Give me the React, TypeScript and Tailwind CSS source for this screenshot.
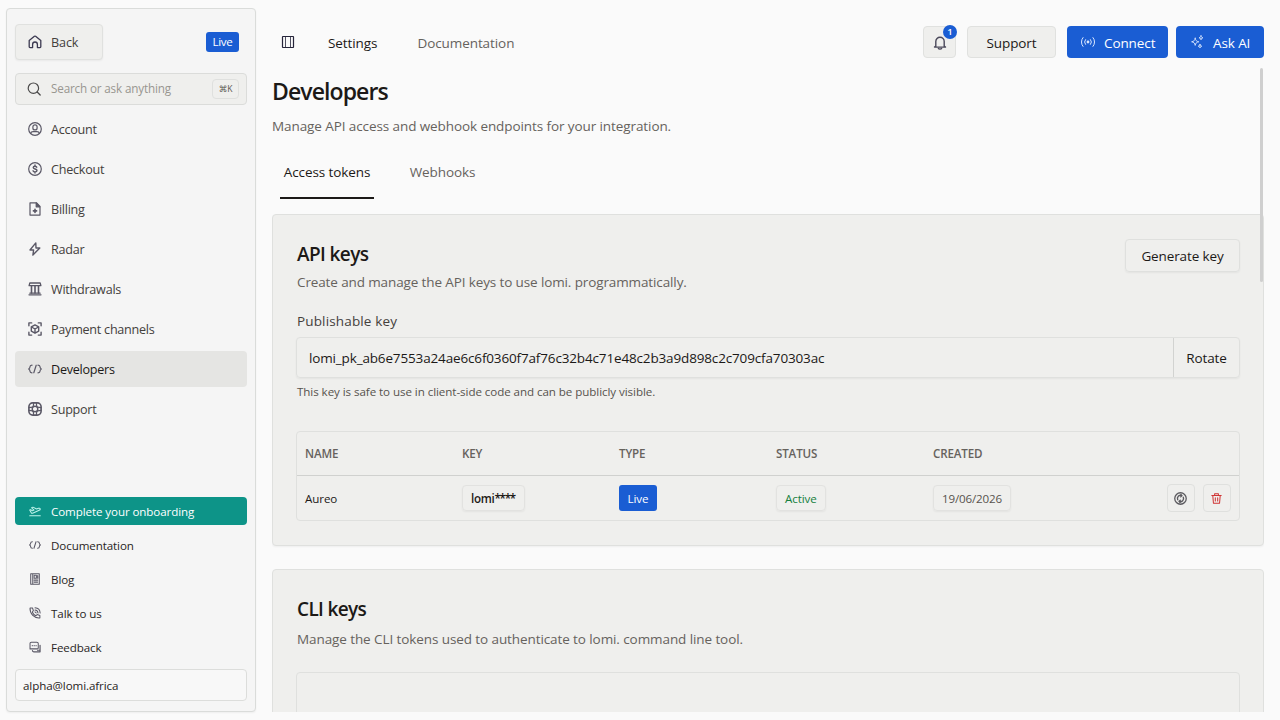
import type { ReactNode } from "react";
import clsx from "clsx";

interface IconProps {
  size?: number;
  className?: string;
  children?: ReactNode;
}

// All icons share a 14 unit grid with round strokes
function Icon({ size = 14, className, children }: IconProps) {
  return (
    <svg
      width={size}
      height={size}
      viewBox="0 0 14 14"
      fill="none"
      stroke="currentColor"
      strokeWidth="1.2"
      strokeLinecap="round"
      strokeLinejoin="round"
      className={clsx("shrink-0", className)}
      aria-hidden="true"
    >
      {children}
    </svg>
  );
}

const icons = {
  home: (
    <path d="M1.2 5.6v6.2a.8.8 0 0 0 .8.8h2.6V9.4a2.4 2.4 0 0 1 4.8 0v3.2H12a.8.8 0 0 0 .8-.8V5.6L7.6 1.3a1 1 0 0 0-1.2 0z" strokeWidth="1.3" />
  ),
  search: (
    <>
      <circle cx="6.4" cy="6.2" r="5.2" />
      <path d="m10.2 10 3 3" />
    </>
  ),
  account: (
    <>
      <circle cx="7" cy="7" r="6.3" />
      <rect x="4.9" y="2.9" width="4.2" height="5" rx="2" />
      <path d="M2.7 11.3c.3-1.3 1.3-1.7 2.3-1.7h4c1 0 2 .4 2.3 1.7" />
    </>
  ),
  checkout: (
    <>
      <circle cx="7" cy="7" r="6.3" />
      <path d="M8.8 5.2c-.2-.7-.9-1-1.8-1-1.1 0-1.8.5-1.8 1.3 0 2 3.8 1 3.8 3 0 .8-.8 1.4-2 1.4-1 0-1.7-.4-2-1.1M7 3v1.2M7 9.9V11" strokeWidth="1.4" />
    </>
  ),
  billing: (
    <>
      <path d="M2 .9v12.2h10V4.5L8.6.9H2z" />
      <path d="M8.2 1v3.8h3.6z" fill="currentColor" />
      <path d="M7 7.3v3.2M5.4 8.9h3.2" strokeWidth="1.6" />
    </>
  ),
  radar: <path d="M7.8.9 2 8h3.6l-.7 5.1L11.800 6H8z" strokeWidth="1.4" />,
  withdrawals: (
    <>
      <path d="M1.1 3.7 1.8 1h10.4l.7 2.7zM1 12.8h12M1.9 11.2h10.2" strokeWidth="1.3" />
      <path d="M3.5 4v7M7 4v7M10.5 4v7" strokeWidth="1.6" />
    </>
  ),
  channels: (
    <>
      <path d="M.9 3.7V.9h2.8M10.3.9h2.8v2.8M13.1 10.3v2.8h-2.8M3.7 13.1H.9v-2.8" strokeWidth="1.4" />
      <path d="m7 2.9 3.7 2v4.2L7 11.2 3.3 9.1V4.900zM3.5 5 7 7l3.5-2M7 7v4" strokeWidth="1.4" />
    </>
  ),
  code: (
    <path d="M4 3.2c-1.3.1-2 .6-2 1.6 0 1-.4 1.7-1.3 2.2.9.5 1.3 1.2 1.3 2.2s.7 1.5 2 1.6M10 3.2c1.3.1 2 .6 2 1.6 0 1 .4 1.7 1.3 2.2-.9.5-1.3 1.2-1.3 2.2s-.7 1.5-2 1.6M8.2 3.2l-2.4 7.6" />
  ),
  support: (
    <>
      <rect x=".9" y=".9" width="12.2" height="12.2" rx="3.8" strokeWidth="1.6" />
      <circle cx="7" cy="7" r="2.8" strokeWidth="1.4" />
      <path d="m5.7 1-.5 3.6M8.3 1l.5 3.6M5.7 13l-.5-3.6M8.3 13l.5-3.6M1 5.7l3.6-.5M1 8.3l3.6.5M13 5.7l-3.6-.5M13 8.3l-3.6.5" />
    </>
  ),
  onboarding: (
    <>
      <path d="M.8 12.6h12.4" />
      <path d="m.8 5.8 1.2-.4 1.8 1.4 2-.8L3 3.2l1.600-.7 4.3 2.2 2.1-.8c1-.3 2 .1 2.1.7.1.6-.3 1.2-1.2 1.5L4.2 9.600H3z" />
    </>
  ),
  blog: (
    <>
      <path d="M2 .9h10v12.2H2zM4.4 1v12" />
      <rect x="6" y="2.6" width="2.6" height="3.6" />
      <path d="M6 8.4h4M6 10.6h4M10.2 3v3" strokeWidth="1.4" />
    </>
  ),
  call: (
    <>
      <path d="M1.2 1.2h2.9l1 3.1-1.3 1.5a8 8 0 0 0 4.3 4.4l1.5-1.4 3.1 1v2.9C6.3 13.4.8 8 1.2 1.2z" />
      <path d="M7 3.5c2 .2 3.3 1.5 3.5 3.5M7 1c3.3.2 5.8 2.7 6 6M7 5.7c.8.1 1.2.5 1.3 1.3" />
    </>
  ),
  feedback: (
    <>
      <path d="M1.2 9.2h8.6a1 1 0 0 0 1-1V3a1.6 1.6 0 0 0-1.6-1.6H2.8A1.6 1.6 0 0 0 1.2 3z" />
      <path d="M12.9 5v7.6H5.5c-1 0-1.5-.6-1.5-1.4M3.8 5.4h.1M6 5.4h.1M8.2 5.4h.1M10 10.8h3" strokeWidth="1.4" />
    </>
  ),
  panel: (
    <>
      <rect x="1.5" y="1.5" width="11" height="11" rx=".4" />
      <path d="M4.5 1.5v11M9.5 1.5v11" strokeWidth=".8" />
    </>
  ),
  bell: (
    <>
      <path d="M2.8 10.2V5.4a4.2 4.2 0 0 1 8.4 0v4.8l1.3.9h-11z" strokeWidth="1.4" />
      <path d="M5.4 12.4c.4.9 2.8.9 3.2 0" strokeWidth="1.4" />
    </>
  ),
  connect: (
    <>
      <circle cx="7" cy="7" r=".8" fill="currentColor" />
      <path d="M4.5 4.6a3.7 3.7 0 0 0 0 4.8M9.5 4.6a3.7 3.7 0 0 1 0 4.8M2 2.6a6.7 6.7 0 0 0 0 8.8M12 2.6a6.7 6.7 0 0 1 0 8.8" strokeWidth="1" />
    </>
  ),
  sparkles: (
    <path
      d="M5.2 3.2c.4 2.3 1.2 3.2 3.6 3.6-2.4.4-3.2 1.3-3.6 3.6-.4-2.3-1.2-3.2-3.6-3.6 2.4-.4 3.2-1.3 3.6-3.6zM11 .8c.2 1.3.7 1.8 2 2-1.3.2-1.8.7-2 2-.2-1.3-.7-1.8-2-2 1.3-.2 1.8-.7 2-2zM10 9.4c.2 1.2.6 1.6 1.8 1.8-1.2.2-1.6.6-1.8 1.8-.2-1.2-.6-1.6-1.8-1.8 1.2-.2 1.6-.6 1.8-1.8z"
      strokeWidth=".9"
    />
  ),
  rotate: (
    <>
      <circle cx="7" cy="7" r="6.2" strokeWidth="1.4" />
      <path d="M4 8.3a3.3 3.3 0 0 1 4.3-4.4M10 5.7a3.3 3.3 0 0 1-4.3 4.4M7.4 2.7l1.2 1.3-1.4 1.1M6.6 11.3 5.4 10l1.4-1.1" strokeWidth="1.5" />
    </>
  ),
  trash: (
    <path d="M1 3.2h12M4.6 3V1h4.8v2M2.3 3.4l.8 9.6h7.8l.8-9.6M5.5 6.2v4M8.5 6.2v4" strokeWidth="1.3" />
  ),
};

const navItems = [
  { label: "Account", icon: icons.account },
  { label: "Checkout", icon: icons.checkout },
  { label: "Billing", icon: icons.billing },
  { label: "Radar", icon: icons.radar },
  { label: "Withdrawals", icon: icons.withdrawals },
  { label: "Payment channels", icon: icons.channels },
  { label: "Developers", icon: icons.code, active: true },
  { label: "Support", icon: icons.support },
];

const helpItems = [
  { label: "Complete your onboarding", icon: icons.onboarding, highlight: true },
  { label: "Documentation", icon: icons.code },
  { label: "Blog", icon: icons.blog },
  { label: "Talk to us", icon: icons.call },
  { label: "Feedback", icon: icons.feedback },
];

function Sidebar() {
  return (
    <aside className="flex w-[250px] shrink-0 flex-col rounded border border-[#dadcda] bg-[#f5f5f5] px-2 pt-[15px] pb-[10px] shadow-xs">
      <div className="flex items-center justify-between pr-2">
        <button className="flex h-9 w-[88px] items-center gap-[9px] rounded border border-[#e0e1df] bg-[#efefed] pl-[12px] text-[12.6px] tracking-[-0.1px] text-[#44403c] shadow-xs">
          <Icon className="text-[#3b3950]">{icons.home}</Icon>
          <span className="pt-0.5">Back</span>
        </button>
        <span className="flex h-5 w-[33px] items-center justify-center rounded-[3px] bg-[#1a5dd3] text-[11.6px] tracking-[-0.3px] text-white">
          Live
        </span>
      </div>

      <div className="mt-[13px] flex h-8 items-center rounded border border-[#dbdcda] bg-[#efefed] pr-[7px] pl-[11px]">
        <Icon className="text-[#4b4a4a]">{icons.search}</Icon>
        <span className="ml-2.5 flex-1 text-[11.7px] tracking-[-0.16px] text-[#989690]">Search or ask anything</span>
        <kbd className="flex h-5 w-[27px] items-center justify-center rounded border border-[#dfe0de] pt-px font-['Open_Sans','DejaVu_Sans',sans-serif] text-[8.5px] tracking-[-0.2px] text-[#57534e]">
          ⌘K
        </kbd>
      </div>

      <nav className="mt-1.5 flex flex-col gap-1">
        {navItems.map((item) => (
          <a
            key={item.label}
            className={clsx(
              "flex h-9 items-center gap-[9px] rounded pl-[13px] text-[12.6px] tracking-[-0.25px]",
              item.active ? "bg-[#e5e5e3] text-[#1c1917]" : "text-[#44403c]",
            )}
          >
            <Icon className="text-[#5a5866]">{item.icon}</Icon>
            <span className="pt-0.5">{item.label}</span>
          </a>
        ))}
      </nav>

      <div className="mt-auto flex flex-col gap-1.5">
        {helpItems.map((item) => (
          <a
            key={item.label}
            className={clsx(
              "flex h-7 items-center gap-[10px] rounded pl-[14px] text-[11.6px] tracking-[-0.1px]",
              item.highlight ? "bg-[#0d9488] text-white" : "text-[#292524]",
            )}
          >
            <Icon size={12} className={item.highlight ? "text-[#bdf3ea]" : "text-[#5a5866]"}>
              {item.icon}
            </Icon>
            <span className="pt-0.5">{item.label}</span>
          </a>
        ))}
      </div>

      <div className="mt-2 flex h-8 shrink-0 items-center rounded border border-[#dcdddb] bg-[#f8f8f8] pt-px pl-[7px] text-[11.6px] tracking-[-0.1px] text-[#292524]">
        alpha@lomi.africa
      </div>
    </aside>
  );
}

function Header() {
  return (
    <header className="flex h-8 items-center">
      <Icon className="ml-[9px] text-[#26243a]">{icons.panel}</Icon>
      <nav className="ml-[33px] flex gap-10 pt-[3px] text-[13.5px] tracking-[-0.08px]">
        <a className="text-[#1c1917]">Settings</a>
        <a className="text-[#66625d]">Documentation</a>
      </nav>

      <div className="ml-auto flex text-[13.5px] tracking-[-0.1px]">
        <button className="relative flex h-8 w-[33px] items-center justify-center rounded border border-[#e0e1df] bg-[#efefed]">
          <Icon className="mt-px text-[#4b495a]">{icons.bell}</Icon>
          <span className="absolute -top-0.5 -right-[2px] flex size-[14px] items-center justify-center rounded-full bg-[#1a5dd3] text-[9.5px] font-semibold text-white">
            1
          </span>
        </button>
        <button className="ml-[11px] h-8 w-[89px] rounded border border-[#e0e1df] bg-[#efefed] pt-0.5 text-[#1c1917]">
          Support
        </button>
        <button className="ml-[11px] flex h-8 w-[101px] items-center gap-[9px] rounded bg-[#1a5dd3] pl-[14px] text-white">
          <Icon className="text-[#dbe8ff]">{icons.connect}</Icon>
          <span className="pt-0.5">Connect</span>
        </button>
        <button className="ml-2 flex h-8 w-[88px] items-center gap-[9px] rounded bg-[#1a5dd3] pl-[14px] text-white">
          <Icon className="text-[#dbe8ff]">{icons.sparkles}</Icon>
          <span className="pt-0.5">Ask AI</span>
        </button>
      </div>
    </header>
  );
}

const chip = "inline-flex h-[26px] items-center rounded border border-[#e2e2e0] px-2 pt-px shadow-xs";

function KeysTable() {
  return (
    <div className="mt-[31px] rounded border border-[#dfe0de] text-[11.6px] tracking-[-0.1px]">
      <div className="grid h-11 grid-cols-6 items-center border-b border-[#d0d1cf] pt-px font-semibold tracking-[-0.15px] text-[#66625d]">
        <span className="pl-2">NAME</span>
        <span className="pl-2">KEY</span>
        <span className="pl-2">TYPE</span>
        <span className="pl-2">STATUS</span>
        <span className="pl-2">CREATED</span>
      </div>
      <div className="grid h-11 grid-cols-6 items-center text-[#1c1917]">
        <div className="pt-0.5 pl-2">Aureo</div>
        <div className="flex pl-2">
          <span className={clsx(chip, "w-[63px] font-semibold tracking-[-0.3px]")}>
            lomi<span className="tracking-[-1.2px]">****</span>
          </span>
        </div>
        <div className="flex pl-2">
          <span className="flex h-[26px] w-[38px] items-center justify-center rounded-[3px] bg-[#1a5dd3] pt-px text-white">
            Live
          </span>
        </div>
        <div className="flex pl-2">
          <span className={clsx(chip, "text-[#15803d]")}>Active</span>
        </div>
        <div className="flex pl-2">
          <span className={clsx(chip, "tracking-[-0.15px] text-[#57534e]")}>19/06/2026</span>
        </div>
        <div className="flex justify-end gap-2 pr-2">
          <button className="flex size-7 items-center justify-center rounded border border-[#dfe0de] pr-px text-[#5c5b60]">
            <Icon size={13}>{icons.rotate}</Icon>
          </button>
          <button className="flex size-7 items-center justify-center rounded border border-[#dfe0de] pr-px text-[#d03434]">
            <Icon size={11}>{icons.trash}</Icon>
          </button>
        </div>
      </div>
    </div>
  );
}

export default function App() {
  return (
    <div className="flex h-[720px] w-[1280px] overflow-hidden bg-[#fafafa] py-2 pr-4 pl-1.5 font-['Open_Sans','Noto_Sans',sans-serif] text-[#1c1917]">
      <Sidebar />

      <main className="relative ml-4 flex min-w-0 flex-1 flex-col pt-[18px]">
        <Header />

        <div className="flex min-h-0 flex-1 flex-col overflow-hidden pt-[17px]">
          <h1 className="text-[23px] leading-8 font-semibold tracking-[-0.9px]">Developers</h1>
          <p className="mt-[9px] text-[13.5px] leading-5 tracking-[-0.09px] text-[#66625d]">
            Manage API access and webhook endpoints for your integration.
          </p>

          <div className="mt-[18px] flex h-[45px] shrink-0 pl-2 text-[13.5px] tracking-[-0.1px]">
            <button className="flex w-[94px] justify-center border-b-2 border-[#1c1917] pt-2">Access tokens</button>
            <button className="flex w-[137px] justify-center pt-2 text-[#66625d]">Webhooks</button>
          </div>

          <section className="mt-[15px] h-[332px] shrink-0 rounded border border-[#dfe0de] bg-[#efefed] px-[23px] pt-6 shadow-xs">
            <div className="flex justify-between">
              <div className="pl-px">
                <h2 className="pt-px text-[19px] leading-7 font-semibold tracking-[-0.6px]">API keys</h2>
                <p className="mt-1 text-[13.5px] leading-5 tracking-[-0.12px] text-[#66625d]">
                  Create and manage the API keys to use lomi. programmatically.
                </p>
              </div>
              <button className="h-[33px] w-[115px] rounded border border-[#dfe0de] pt-0.5 text-[13.5px] tracking-[-0.12px] shadow-xs">
                Generate key
              </button>
            </div>

            <p className="mt-[19px] pl-px text-[13.5px] leading-5 tracking-[0.15px] text-[#44403c]">Publishable key</p>
            <div className="mt-[6px] flex h-[41px] rounded border border-[#dfe0de] text-[13.5px] shadow-xs">
              <span className="flex flex-1 items-center border-r border-[#d2d3d1] pt-0.5 pl-3 tracking-[-0.15px]">
                lomi_pk_ab6e7553a24ae6c6f0360f7af76c32b4c71e48c2b3a9d898c2c709cfa70303ac
              </span>
              <button className="w-[65px] pt-0.5 tracking-[-0.1px]">Rotate</button>
            </div>
            <p className="mt-[6px] pl-px text-[11.6px] leading-4 tracking-[-0.07px] text-[#57534e]">
              This key is safe to use in client-side code and can be publicly visible.
            </p>

            <KeysTable />
          </section>

          <section className="mt-[23px] h-[332px] shrink-0 rounded border border-[#dfe0de] bg-[#efefed] px-[23px] pt-[25px]">
            <h2 className="pl-px text-[19px] leading-7 font-semibold tracking-[-0.65px]">CLI keys</h2>
            <p className="mt-[6px] pl-px text-[13.5px] leading-5 tracking-[-0.09px] text-[#66625d]">
              Manage the CLI tokens used to authenticate to lomi. command line tool.
            </p>
            <div className="mt-[23px] h-24 rounded border border-[#dfe0de]" />
          </section>
        </div>

        {/* Scrollbar thumb */}
        <div className="absolute top-[60px] right-[1px] h-[214px] w-[3px] rounded-full bg-[#cfcfcf]" />
      </main>
    </div>
  );
}
